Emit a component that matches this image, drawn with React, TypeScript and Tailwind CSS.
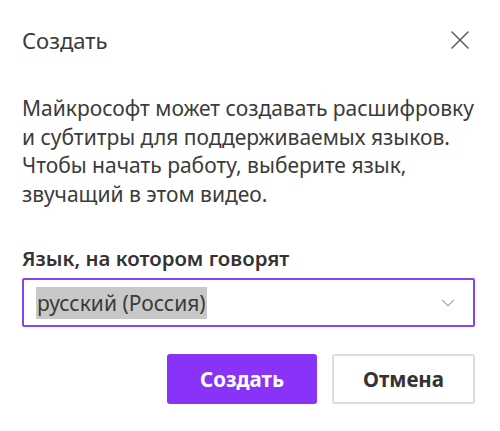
import { ChevronDown } from "lucide-react";

const font = { fontFamily: '"Noto Sans", "Open Sans", sans-serif' };

export default function App() {
  return (
    <div
      style={font}
      className="h-[431px] w-[500px] bg-white pl-[22px] pr-[25px] text-[#333]"
    >
      <header className="flex h-[80px] items-center justify-between">
        <h1 className="text-[22px] font-normal text-[#3a3a3a]">Создать</h1>
        <button className="mr-[6px] text-[#5a5a5a]" aria-label="Закрыть">
          <svg width="18" height="18" viewBox="0 0 18 18" fill="none">
            <path
              d="M1 1L17 17M17 1L1 17"
              stroke="currentColor"
              strokeWidth="1.5"
              strokeLinecap="round"
            />
          </svg>
        </button>
      </header>

      <p className="mt-[14px] text-[21px] leading-[28.5px] text-[#3b3b3b]">
        Майкрософт может создавать расшифровку
        <br />и субтитры для поддерживаемых языков.
        <br />
        Чтобы начать работу, выберите язык,
        <br />
        звучащий в этом видео.
      </p>

      <label className="mt-[38px] block text-[20.4px] font-semibold leading-[24px] text-[#333]">
        Язык, на котором говорят
      </label>

      <div className="mt-[8px] flex h-[49px] items-center justify-between rounded-[2px] border-[2.5px] border-[#8b3ff7] pl-[12px] pr-[14px]">
        <span className="bg-[#c8c8c8] px-[1px] text-[21px] leading-[32px] text-[#3a3a3a]">
          русский (Россия)
        </span>
        <ChevronDown size={22} strokeWidth={1.1} className="text-[#8a8a8a]" />
      </div>

      <div className="mt-[27px] flex justify-end gap-[15px]">
        <button className="h-[50px] w-[150px] rounded-[3px] bg-[#8a33f8] text-[20.5px] font-bold text-white">
          Создать
        </button>
        <button className="h-[50px] w-[143px] rounded-[3px] border-[2px] border-[#dcdcdc] bg-white text-[20.5px] font-bold text-[#333]">
          Отмена
        </button>
      </div>
    </div>
  );
}
